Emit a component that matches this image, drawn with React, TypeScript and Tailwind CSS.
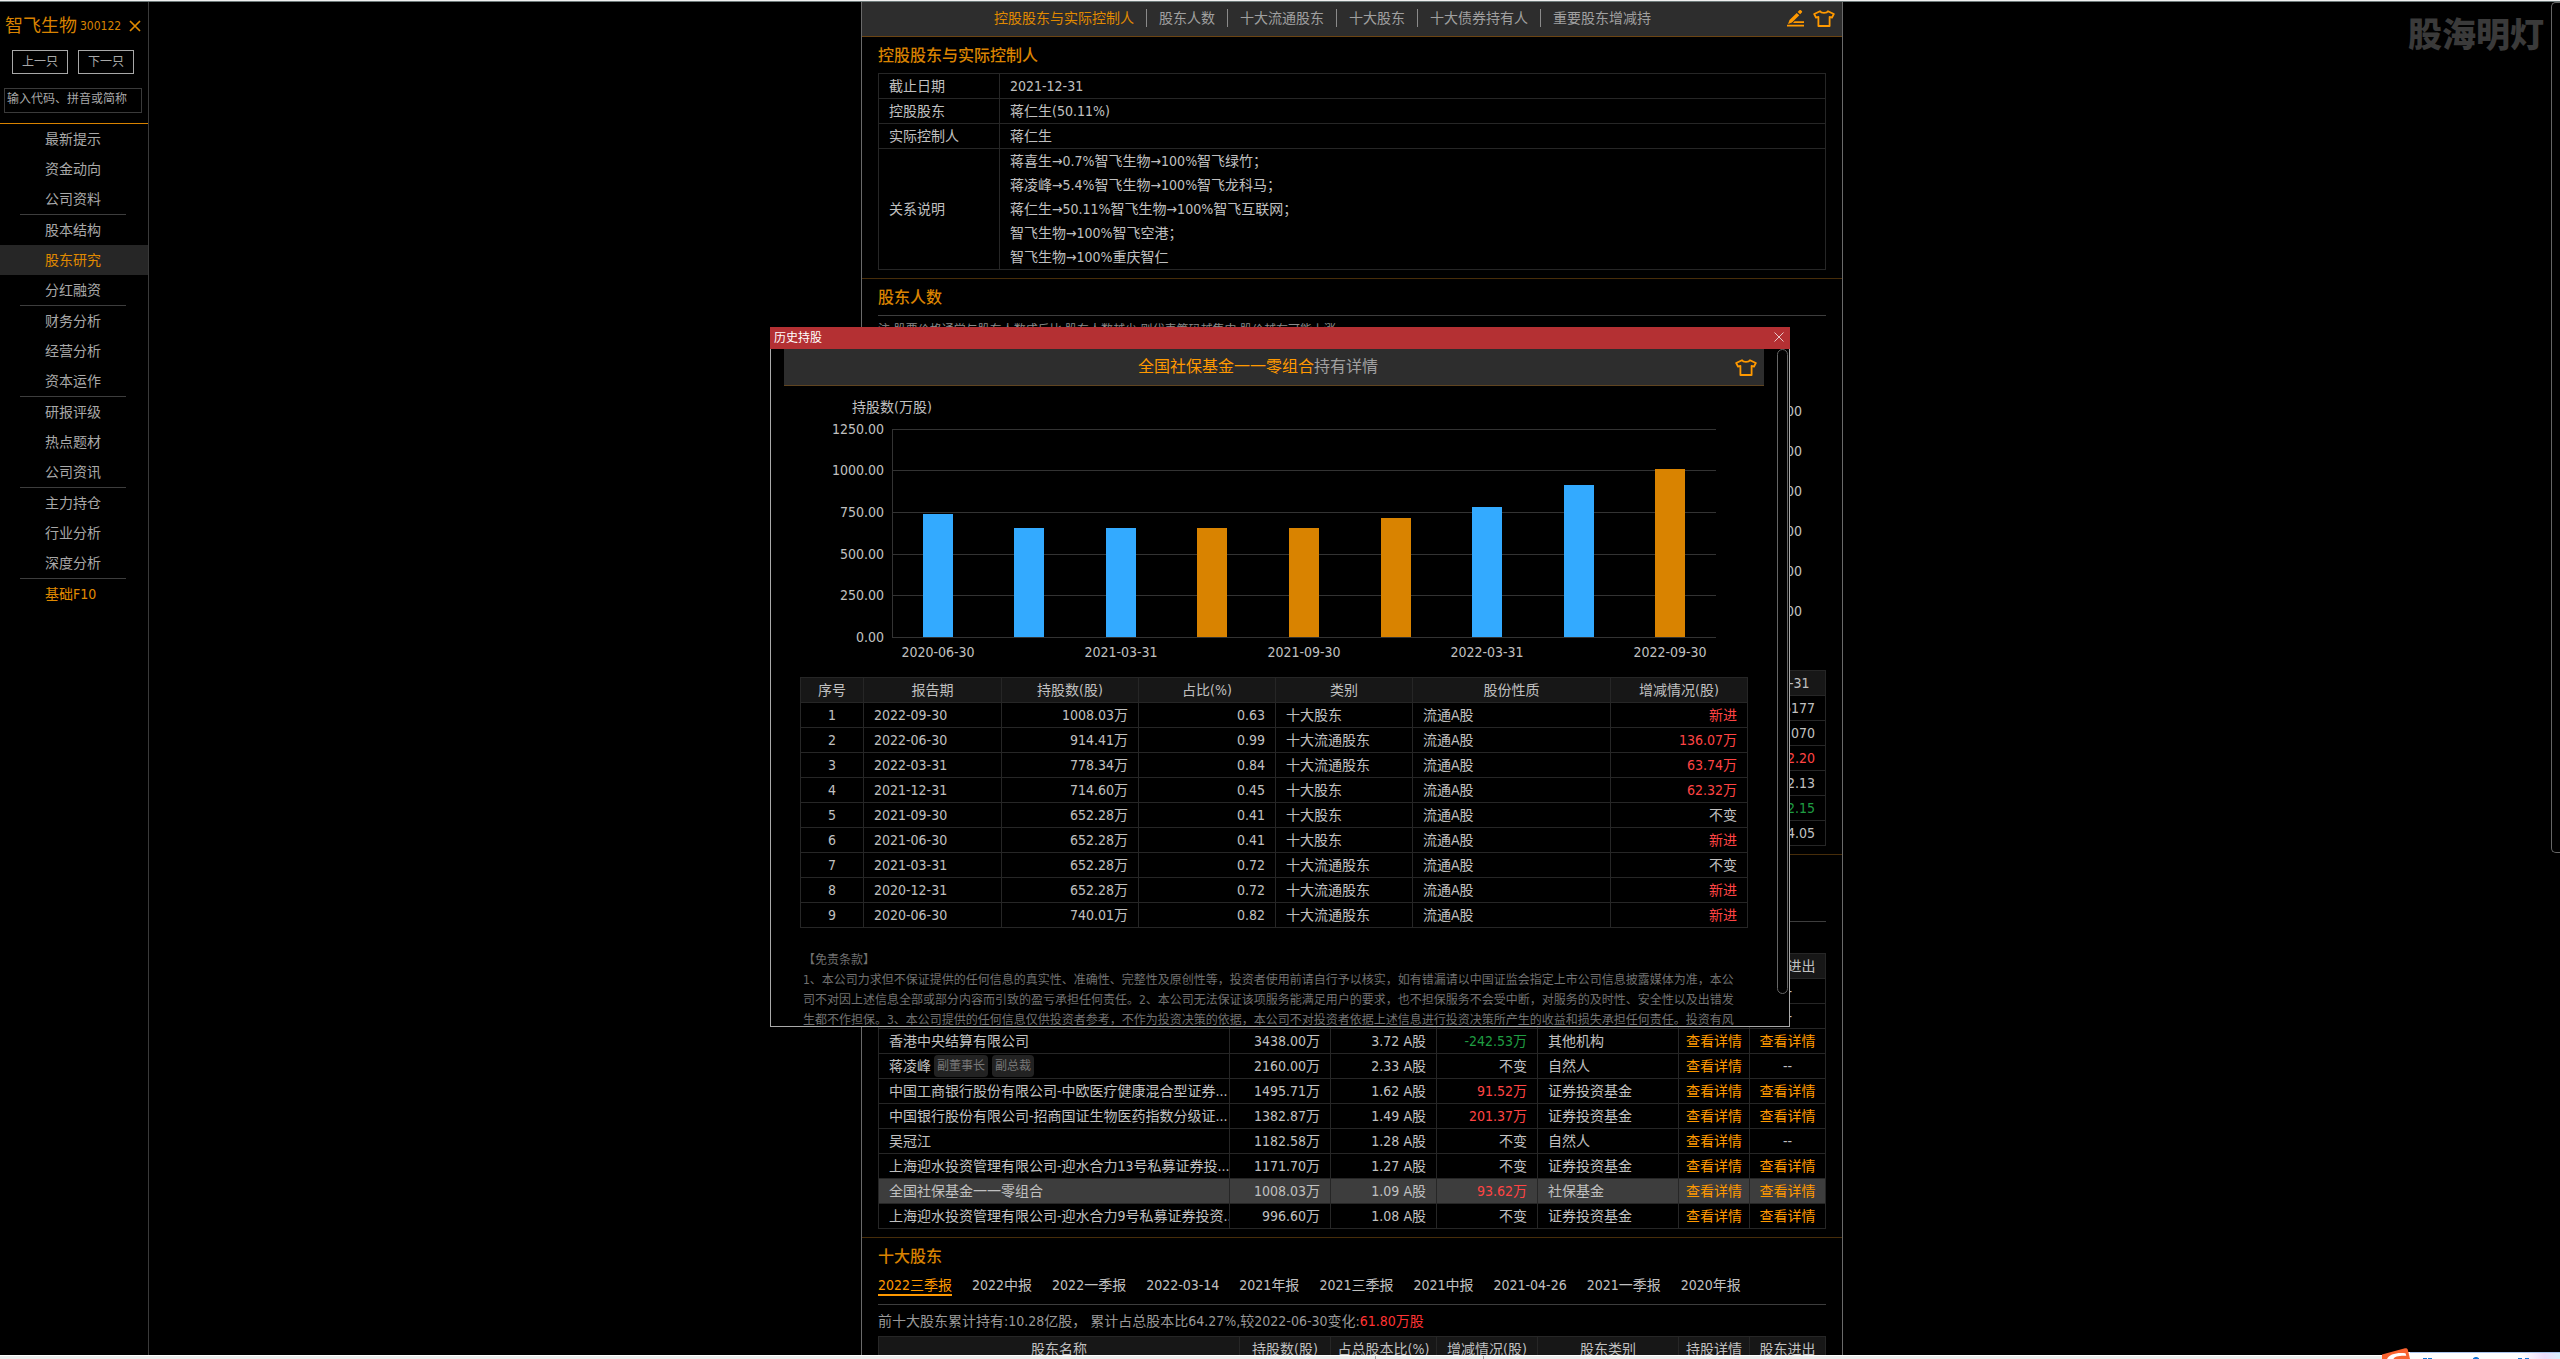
import React from "react";

const FONT = "font-['DejaVu_Sans_Condensed','Noto_Sans_CJK_SC',sans-serif]";

const menuGroups: string[][] = [
  ["最新提示", "资金动向", "公司资料"],
  ["股本结构", "股东研究", "分红融资"],
  ["财务分析", "经营分析", "资本运作"],
  ["研报评级", "热点题材", "公司资讯"],
  ["主力持仓", "行业分析", "深度分析"],
];

const sections = ["控股股东与实际控制人", "股东人数", "十大流通股东", "十大股东", "十大债券持有人", "重要股东增减持"];

const relations = [
  "蒋喜生→0.7%智飞生物→100%智飞绿竹；",
  "蒋凌峰→5.4%智飞生物→100%智飞龙科马；",
  "蒋仁生→50.11%智飞生物→100%智飞互联网；",
  "智飞生物→100%智飞空港；",
  "智飞生物→100%重庆智仁",
];

type Holder = {
  name: string;
  tags?: string[];
  shares: string;
  ratio: string;
  change: string;
  kind: string;
  detail: boolean;
  flow: boolean;
  active?: boolean;
};

const holders: Holder[] = [
  { name: "", shares: "", ratio: "", change: "", kind: "", detail: false, flow: false },
  { name: "", shares: "", ratio: "", change: "", kind: "", detail: false, flow: false },
  { name: "香港中央结算有限公司", shares: "3438.00万", ratio: "3.72 A股", change: "-242.53万", kind: "其他机构", detail: true, flow: true },
  { name: "蒋凌峰", tags: ["副董事长", "副总裁"], shares: "2160.00万", ratio: "2.33 A股", change: "不变", kind: "自然人", detail: true, flow: false },
  { name: "中国工商银行股份有限公司-中欧医疗健康混合型证券...", shares: "1495.71万", ratio: "1.62 A股", change: "91.52万", kind: "证券投资基金", detail: true, flow: true },
  { name: "中国银行股份有限公司-招商国证生物医药指数分级证...", shares: "1382.87万", ratio: "1.49 A股", change: "201.37万", kind: "证券投资基金", detail: true, flow: true },
  { name: "吴冠江", shares: "1182.58万", ratio: "1.28 A股", change: "不变", kind: "自然人", detail: true, flow: false },
  { name: "上海迎水投资管理有限公司-迎水合力13号私募证券投...", shares: "1171.70万", ratio: "1.27 A股", change: "不变", kind: "证券投资基金", detail: true, flow: true },
  { name: "全国社保基金一一零组合", shares: "1008.03万", ratio: "1.09 A股", change: "93.62万", kind: "社保基金", detail: true, flow: true, active: true },
  { name: "上海迎水投资管理有限公司-迎水合力9号私募证券投资...", shares: "996.60万", ratio: "1.08 A股", change: "不变", kind: "证券投资基金", detail: true, flow: true },
];

const periods = ["2022三季报", "2022中报", "2022一季报", "2022-03-14", "2021年报", "2021三季报", "2021中报", "2021-04-26", "2021一季报", "2020年报"];

const history = [
  ["2022-09-30", "1008.03万", "0.63", "十大股东", "新进"],
  ["2022-06-30", "914.41万", "0.99", "十大流通股东", "136.07万"],
  ["2022-03-31", "778.34万", "0.84", "十大流通股东", "63.74万"],
  ["2021-12-31", "714.60万", "0.45", "十大股东", "62.32万"],
  ["2021-09-30", "652.28万", "0.41", "十大股东", "不变"],
  ["2021-06-30", "652.28万", "0.41", "十大股东", "新进"],
  ["2021-03-31", "652.28万", "0.72", "十大流通股东", "不变"],
  ["2020-12-31", "652.28万", "0.72", "十大流通股东", "新进"],
  ["2020-06-30", "740.01万", "0.82", "十大流通股东", "新进"],
];

const BLUE = "#33aaff";
const AMBER = "#d98300";
const bars = [
  { date: "2020-06-30", value: 740.01, fill: BLUE },
  { date: "", value: 652.28, fill: BLUE },
  { date: "2021-03-31", value: 652.28, fill: BLUE },
  { date: "", value: 652.28, fill: AMBER },
  { date: "2021-09-30", value: 652.28, fill: AMBER },
  { date: "", value: 714.6, fill: AMBER },
  { date: "2022-03-31", value: 778.34, fill: BLUE },
  { date: "", value: 914.41, fill: BLUE },
  { date: "2022-09-30", value: 1008.03, fill: AMBER },
];

const ticks = [1250, 1000, 750, 500, 250, 0];

const cell = "border border-[#262626] px-[10px] py-0 leading-6";

function changeColor(v: string) {
  if (v.startsWith("-")) return "text-[#1f9d42]";
  return v === "不变" ? "" : "text-[#ff4444]";
}

function Shirt() {
  return (
    <svg viewBox="0 0 22 17" className="h-[17px] w-[22px]" fill="none" stroke="#ff9900" strokeWidth="1.8" strokeLinejoin="round">
      <path d="M7 1.2 1.2 4 3 7.6l2.4-.8V16h11.2V6.800l2.400.8L20.800 4 15 1.200C13.800 3.400 8.200 3.400 7 1.200Z" />
    </svg>
  );
}

function Pencil() {
  return (
    <svg viewBox="0 0 18 17" className="h-[17px] w-[18px]" fill="#ff9900">
      <path d="M10.600 2 12.400.3c.5-.4 1-.4 1.500 0l.9.8c.5.5.5 1 0 1.500L13.200 4.300ZM9.700 3l2.600 2.300L5 12.500l-4 1.600 1.500-4Z" />
      <path d="M7.500 11.300H17v1.600H6ZM0 14.800h17v1.600H0Z" />
    </svg>
  );
}

function Sidebar() {
  return (
    <aside className="w-[149px] shrink-0 border-r border-[#3a3a3a] text-sm text-[#a8a8a8]">
      <div className="flex h-12 items-center pl-[5px] text-[#d98300]">
        <h1 className="text-lg leading-none">智飞生物</h1>
        <span className="ml-[3px] text-xs">300122</span>
        <button type="button" aria-label="关闭" className="ml-2">
          <svg viewBox="0 0 12 12" className="size-3" stroke="#e08a00" strokeWidth="1.700" fill="none">
            <path d="m1 1 10 10M11 1 1 11" />
          </svg>
        </button>
      </div>
      <div className="flex gap-[10px] pl-3 text-xs">
        <button type="button" className="h-6 w-14 border border-[#a8a8a8] leading-none">上一只</button>
        <button type="button" className="h-6 w-14 border border-[#a8a8a8] leading-none">下一只</button>
      </div>
      <div className="h-[49px] pt-[14px] pl-1">
        <input
          type="text"
          aria-label="搜索代码"
          placeholder="输入代码、拼音或简称"
          className="h-[25px] w-[138px] border border-[#3a3a3a] bg-black px-[2px] pb-[3px] text-xs text-[#a8a8a8] placeholder:text-[#a8a8a8]"
        />
      </div>
      <nav className="border-t border-[#d98300]">
        {menuGroups.map((group) => (
          <div key={group[0]}>
            {group.map((item) => (
              <a
                key={item}
                href="#"
                className={
                  item === "股东研究"
                    ? "block bg-[#262626] pl-[45px] leading-[30px] text-[#e08a00]"
                    : "block pl-[45px] leading-[30px]"
                }
              >
                {item}
              </a>
            ))}
            <div className="mr-[22px] ml-5 h-px bg-[#3d3d3d]" />
          </div>
        ))}
        <a href="#" className="block pl-[45px] leading-[30px] text-[#e08a00]">基础F10</a>
      </nav>
    </aside>
  );
}

function SectionTitle({ children }: { children: React.ReactNode }) {
  return <h2 className="pt-[2px] text-base leading-[34px] font-medium text-[#d98300]">{children}</h2>;
}

function HolderHead({ first, second }: { first: string; second: string }) {
  return (
    <>
      <colgroup>
        <col />
        <col className={first === "wide" ? "w-[91px]" : "w-[101px]"} />
        <col className="w-[106px]" />
        <col className="w-[101px]" />
        <col className="w-[141px]" />
        <col className="w-[71px]" />
        <col className="w-[76px]" />
      </colgroup>
      <thead>
        <tr className="bg-[#171717]">
          {["股东名称", "持股数(股)", second, "增减情况(股)", "股东类别", "持股详情", "股东进出"].map((h) => (
            <th key={h} className="border border-[#262626] leading-6 font-normal whitespace-nowrap">{h}</th>
          ))}
        </tr>
      </thead>
    </>
  );
}

function Panel() {
  return (
    <article className="flex w-[982px] flex-col overflow-hidden border-x border-[#6a6a6a] text-sm text-[#c0c0c0]">
      <header className="flex h-[35px] shrink-0 items-center border-b border-[#6b4413] bg-[#2d2d2d]">
        <nav className="flex flex-1 justify-center divide-x divide-[#8a8a8a] pr-1 pb-[2px]">
          {sections.map((s, i) => (
            <a key={s} href="#" className={i === 0 ? "px-3 leading-[18px] text-[#e08a00]" : "px-3 leading-[18px] text-[#a0a0a0]"}>
              {s}
            </a>
          ))}
        </nav>
        <div className="flex gap-2 pr-[7px] pb-[2px]">
          <button type="button" aria-label="编辑"><Pencil /></button>
          <button type="button" aria-label="换肤"><Shirt /></button>
        </div>
      </header>

      <section className="shrink-0 border-b border-[#472d0a] px-4 pb-2">
        <SectionTitle>控股股东与实际控制人</SectionTitle>
        <table className="w-full table-fixed border-collapse">
          <colgroup>
            <col className="w-[121px]" />
            <col />
          </colgroup>
          <tbody>
            {[["截止日期", "2021-12-31"], ["控股股东", "蒋仁生(50.11%)"], ["实际控制人", "蒋仁生"]].map(([k, v]) => (
              <tr key={k}>
                <th scope="row" className={`${cell} text-left font-normal`}>{k}</th>
                <td className={cell}>{v}</td>
              </tr>
            ))}
            <tr>
              <th scope="row" className={`${cell} text-left font-normal`}>关系说明</th>
              <td className={cell}>
                {relations.map((r) => (
                  <div key={r}>{r}</div>
                ))}
              </td>
            </tr>
          </tbody>
        </table>
      </section>

      <section className="shrink-0 border-b border-[#472d0a] px-4 pb-2">
        <SectionTitle>股东人数</SectionTitle>
        <p className="border-t border-[#3d3d3d] pt-1 text-xs leading-5 text-[#8a8a8a]">
          注:股票价格通常与股东人数成反比,股东人数越少,则代表筹码越集中,股价越有可能上涨
        </p>
        <div className="flex flex-col items-end pt-[51px] pr-6 pb-[39px] leading-10">
          {["25.00", "20.00", "15.00", "10.00", "5.00", "0.00"].map((t) => (
            <span key={t}>{t}</span>
          ))}
        </div>
        <table className="w-full table-fixed border-collapse text-right">
          <colgroup>
            <col />
            <col className="w-[105px]" />
          </colgroup>
          <thead>
            <tr className="bg-[#171717]">
              <th className={cell}></th>
              <th className={`${cell} text-center font-normal`}>2020-12-31</th>
            </tr>
          </thead>
          <tbody>
            <tr><td className={cell}></td><td className={cell}>36177</td></tr>
            <tr><td className={cell}></td><td className={cell}>2.070</td></tr>
            <tr><td className={cell}></td><td className={`${cell} text-[#ff4444]`}>2.20</td></tr>
            <tr><td className={cell}></td><td className={cell}>2.13</td></tr>
            <tr><td className={cell}></td><td className={`${cell} text-[#1f9d42]`}>2.15</td></tr>
            <tr><td className={cell}></td><td className={cell}>4.05</td></tr>
          </tbody>
        </table>
      </section>

      <section className="shrink-0 border-b border-[#472d0a] px-4 pb-2">
        <SectionTitle>十大流通股东</SectionTitle>
        <div className="mb-[31px] h-[31px] border-b border-[#3d3d3d]" />
        <table className="w-full table-fixed border-collapse">
          <HolderHead first="narrow" second="占流通股比(%)" />
          <tbody>
            {holders.map((h, i) => (
              <tr key={i} className={h.active ? "bg-[#3d3d3d]" : ""}>
                <td className="overflow-hidden border border-[#262626] pl-[10px] leading-6 whitespace-nowrap">
                  <span className="flex h-6 items-center">
                    {h.name}
                    {h.tags?.map((t) => (
                      <span key={t} className="mr-px ml-[3px] rounded-[4px] bg-[#222] px-[3px] text-xs leading-[22px] text-[#777]">{t}</span>
                    ))}
                  </span>
                </td>
                <td className={`${cell} text-right`}>{h.shares}</td>
                <td className={`${cell} text-right`}>{h.ratio}</td>
                <td className={`${cell} text-right ${changeColor(h.change)}`}>{h.change}</td>
                <td className={cell}>{h.kind}</td>
                <td className="border border-[#262626] text-center leading-6 text-[#ff9900]">
                  {h.detail && <a href="#">查看详情</a>}
                </td>
                <td className="border border-[#262626] text-center leading-6">
                  {h.flow ? <a href="#" className="text-[#ff9900]">查看详情</a> : "--"}
                </td>
              </tr>
            ))}
          </tbody>
        </table>
      </section>

      <section className="shrink-0 px-4">
        <SectionTitle>十大股东</SectionTitle>
        <div className="flex items-start gap-5 border-b border-[#3d3d3d] pb-2">
          {periods.map((p, i) => (
            <button
              key={p}
              type="button"
              className={
                i === 0
                  ? "border-b-2 border-[#ff9900] pt-[2px] leading-[18px] text-[#ff9900]"
                  : "border-b-2 border-transparent pt-[2px] leading-[18px]"
              }
            >
              {p}
            </button>
          ))}
        </div>
        <p className="pt-[2px] leading-[29px] text-[#999]">
          前十大股东累计持有:10.28亿股， 累计占总股本比64.27%,较2022-06-30变化:<span className="text-[#ff3333]">61.80万股</span>
        </p>
        <table className="w-full table-fixed border-collapse">
          <HolderHead first="wide" second="占总股本比(%)" />
        </table>
      </section>
    </article>
  );
}

function HistoryChart() {
  const left = 108;
  const base = 251;
  const unit = 208.3 / 1250;
  return (
    <svg viewBox="0 0 980 291" className="block h-[291px] w-full" fontSize="14" fill="#c0c0c0" role="img" aria-label="持股数(万股)">
      <text x="68" y="26">持股数(万股)</text>
      {ticks.map((t) => {
        const y = Math.round(base - t * unit);
        return (
          <g key={t}>
            <rect x={left} y={y} width="824" height="1" fill="#333" />
            <text x="100" y={y + 5} textAnchor="end">{t.toFixed(2)}</text>
          </g>
        );
      })}
      <rect x={left} y="43" width="1" height="209" fill="#333" />
      {bars.map((b, i) => {
        const cx = Math.round(left + (824 * (i + 0.5)) / 9);
        const h = Math.round(b.value * unit);
        return (
          <g key={i}>
            <rect x={cx - 15} y={base - h} width="30" height={h} fill={b.fill} />
            {b.date && <text x={cx} y="271" textAnchor="middle">{b.date}</text>}
          </g>
        );
      })}
    </svg>
  );
}

function HistoryDialog() {
  return (
    <div className="absolute inset-0 flex items-center justify-center pb-[5px]">
      <div role="dialog" aria-label="历史持股" className="flex h-[700px] w-[1020px] flex-col bg-black text-sm text-[#c0c0c0]">
        <div className="flex h-[22px] shrink-0 items-center justify-between bg-[#b43033] pr-[6px] pl-1 text-xs text-white">
          历史持股
          <button type="button" aria-label="关闭" className="pb-[2px]">
            <svg viewBox="0 0 10 10" className="size-[10px]" stroke="#e8c8c8" strokeWidth="1" fill="none">
              <path d="m.5.5 9 9M9.500.5l-9 9" />
            </svg>
          </button>
        </div>
        <div className="flex min-h-0 flex-1 border-x border-b border-[#aaa] pl-[13px]">
          <div className="min-w-0 flex-1 overflow-hidden">
            <header className="flex h-[37px] items-center border-b border-[#5f4420] bg-[#2d2d2d]">
              <h3 className="flex-1 text-center text-base text-[#a0a0a0]">
                <span className="text-[#ff9900]">全国社保基金一一零组合</span>持有详情
              </h3>
              <button type="button" aria-label="换肤" className="mr-[7px] ml-[3px]"><Shirt /></button>
            </header>
            <HistoryChart />
            <div className="px-4">
              <table className="w-full table-fixed border-collapse">
                <colgroup>
                  <col className="w-[63px]" />
                  <col className="w-[138px]" />
                  <col className="w-[137px]" />
                  <col className="w-[137px]" />
                  <col className="w-[137px]" />
                  <col />
                  <col className="w-[137px]" />
                </colgroup>
                <thead>
                  <tr className="bg-[#171717]">
                    {["序号", "报告期", "持股数(股)", "占比(%)", "类别", "股份性质", "增减情况(股)"].map((h) => (
                      <th key={h} className={`${cell} font-normal`}>{h}</th>
                    ))}
                  </tr>
                </thead>
                <tbody>
                  {history.map(([date, shares, ratio, kind, change], i) => (
                    <tr key={date}>
                      <td className={`${cell} text-center`}>{i + 1}</td>
                      <td className={cell}>{date}</td>
                      <td className={`${cell} text-right`}>{shares}</td>
                      <td className={`${cell} text-right`}>{ratio}</td>
                      <td className={cell}>{kind}</td>
                      <td className={cell}>流通A股</td>
                      <td className={`${cell} text-right ${changeColor(change)}`}>{change}</td>
                    </tr>
                  ))}
                </tbody>
              </table>
            </div>
            <div className="px-[19px] pt-[22px] text-xs leading-5 whitespace-nowrap text-[#707070]">
              <p>【免责条款】</p>
              <p>1、本公司力求但不保证提供的任何信息的真实性、准确性、完整性及原创性等，投资者使用前请自行予以核实，如有错漏请以中国证监会指定上市公司信息披露媒体为准，本公</p>
              <p>司不对因上述信息全部或部分内容而引致的盈亏承担任何责任。2、本公司无法保证该项服务能满足用户的要求，也不担保服务不会受中断，对服务的及时性、安全性以及出错发</p>
              <p>生都不作担保。3、本公司提供的任何信息仅供投资者参考，不作为投资决策的依据，本公司不对投资者依据上述信息进行投资决策所产生的收益和损失承担任何责任。投资有风</p>
            </div>
          </div>
          <div className="mr-px ml-[13px] h-[645px] w-[11px] rounded-full border border-[#666]" />
        </div>
      </div>
    </div>
  );
}

function InputMethodBar() {
  return (
    <svg viewBox="0 0 178 11" className="absolute right-0 bottom-0 h-[11px] w-[178px]">
      <defs>
        <linearGradient id="imeGlow" x1="0" x2="1" y1="0" y2="0">
          <stop offset="0.75" stopColor="#ffffff" />
          <stop offset="0.9" stopColor="#ecdcfa" />
          <stop offset="1" stopColor="#d8f0fb" />
        </linearGradient>
      </defs>
      <rect x="24" y="4" width="154" height="7" fill="url(#imeGlow)" />
      <rect x="28" y="4" width="150" height="1" fill="#a9c4ec" />
      <path d="M0 6.500 23 .3c1.500-.4 2.500.3 2.900 1.600L28 11H0Z" fill="#f9622f" />
      <path d="M5 11C7 6.500 14 4.200 23.500 5.200l.8 2.600C17 7.500 12.500 8.500 11.500 11Z" fill="#fff" />
      <path d="M41 10h4v1h-4zM46 10h4v1h-4zM91 10.200 93 9h2l2 1.200v.8h-6zM136 10h4v1h-4zM143 10h4v1h-4z" fill="#1577d8" />
    </svg>
  );
}

export default function App() {
  return (
    <div className={`relative flex h-screen flex-col overflow-hidden bg-black ${FONT}`}>
      <div className="h-[2px] shrink-0 border-b border-[#6d7a7a] bg-[#f0f0f0]" />
      <div className="flex min-h-0 flex-1">
        <Sidebar />
        <main className="flex min-w-0 flex-1 justify-center pl-1">
          <Panel />
        </main>
        <div className="h-[851px] w-[9px] shrink-0 rounded-l-[5px] border border-r-0 border-[#666]" />
      </div>
      <div className="flex h-1 shrink-0 border-t border-white bg-[#ececec]">
        <div className="w-[1376px] border-r border-[#999]" />
        <div className="w-[108px] border-r border-[#999]" />
      </div>
      <div className="absolute top-3 right-4 text-[34px] leading-[46px] font-black text-[#3a3a3a]">股海明灯</div>
      <HistoryDialog />
      <InputMethodBar />
    </div>
  );
}
